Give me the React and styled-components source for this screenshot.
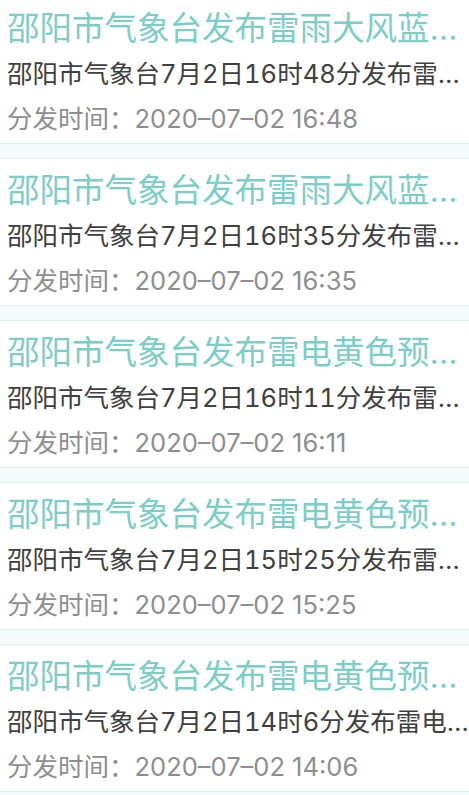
import React from "react";
import styled, { createGlobalStyle } from "styled-components";

const notices = [
  {
    title: "邵阳市气象台发布雷雨大风蓝色预警信号",
    summary: "邵阳市气象台7月2日16时48分发布雷雨大风蓝色预警信号",
    time: "2020–07–02 16:48",
  },
  {
    title: "邵阳市气象台发布雷雨大风蓝色预警信号",
    summary: "邵阳市气象台7月2日16时35分发布雷雨大风蓝色预警信号",
    time: "2020–07–02 16:35",
  },
  {
    title: "邵阳市气象台发布雷电黄色预警信号",
    summary: "邵阳市气象台7月2日16时11分发布雷电黄色预警信号",
    time: "2020–07–02 16:11",
  },
  {
    title: "邵阳市气象台发布雷电黄色预警信号",
    summary: "邵阳市气象台7月2日15时25分发布雷电黄色预警信号",
    time: "2020–07–02 15:25",
  },
  {
    title: "邵阳市气象台发布雷电黄色预警信号",
    summary: "邵阳市气象台7月2日14时6分发布雷电黄色预警信号",
    time: "2020–07–02 14:06",
  },
];

const App = () => {
  return (
    <>
      <GlobalStyle />
      <List>
        {notices.map((item, index) => (
          <Card key={index}>
            <Title>{item.title}</Title>
            <Summary>{item.summary}</Summary>
            <Meta>分发时间：{item.time}</Meta>
          </Card>
        ))}
      </List>
    </>
  );
};

export default App;

const GlobalStyle = createGlobalStyle`
  html, body {
    margin: 0;
    padding: 0;
    background: #f5fbfb;
  }
  body {
    font-family: "Inter", "Noto Sans CJK SC", sans-serif;
  }
`;

const List = styled.div`
  display: flex;
  flex-direction: column;
  gap: 14px;
  background: #f5fbfb;
  height: 795px;
  overflow: hidden;
`;

const Card = styled.div`
  flex-shrink: 0;
  background: #ffffff;
  border-top: 1px solid #dfefef;
  border-bottom: 1px solid #dfefef;
  padding: 9px 0 1px 7px;

  &:first-child {
    border-top: none;
    padding-top: 6px;
  }
`;

const Line = styled.div`
  white-space: nowrap;
  overflow: hidden;
  text-overflow: ellipsis;
`;

const Title = styled(Line)`
  font-size: 32.5px;
  line-height: 46px;
  color: #7bcec5;
`;

const Summary = styled(Line)`
  font-size: 25.5px;
  line-height: 44px;
  color: #404040;
  font-variant-numeric: tabular-nums;
`;

const Meta = styled(Line)`
  font-size: 25.5px;
  line-height: 46px;
  color: #8e8e8e;
`;
